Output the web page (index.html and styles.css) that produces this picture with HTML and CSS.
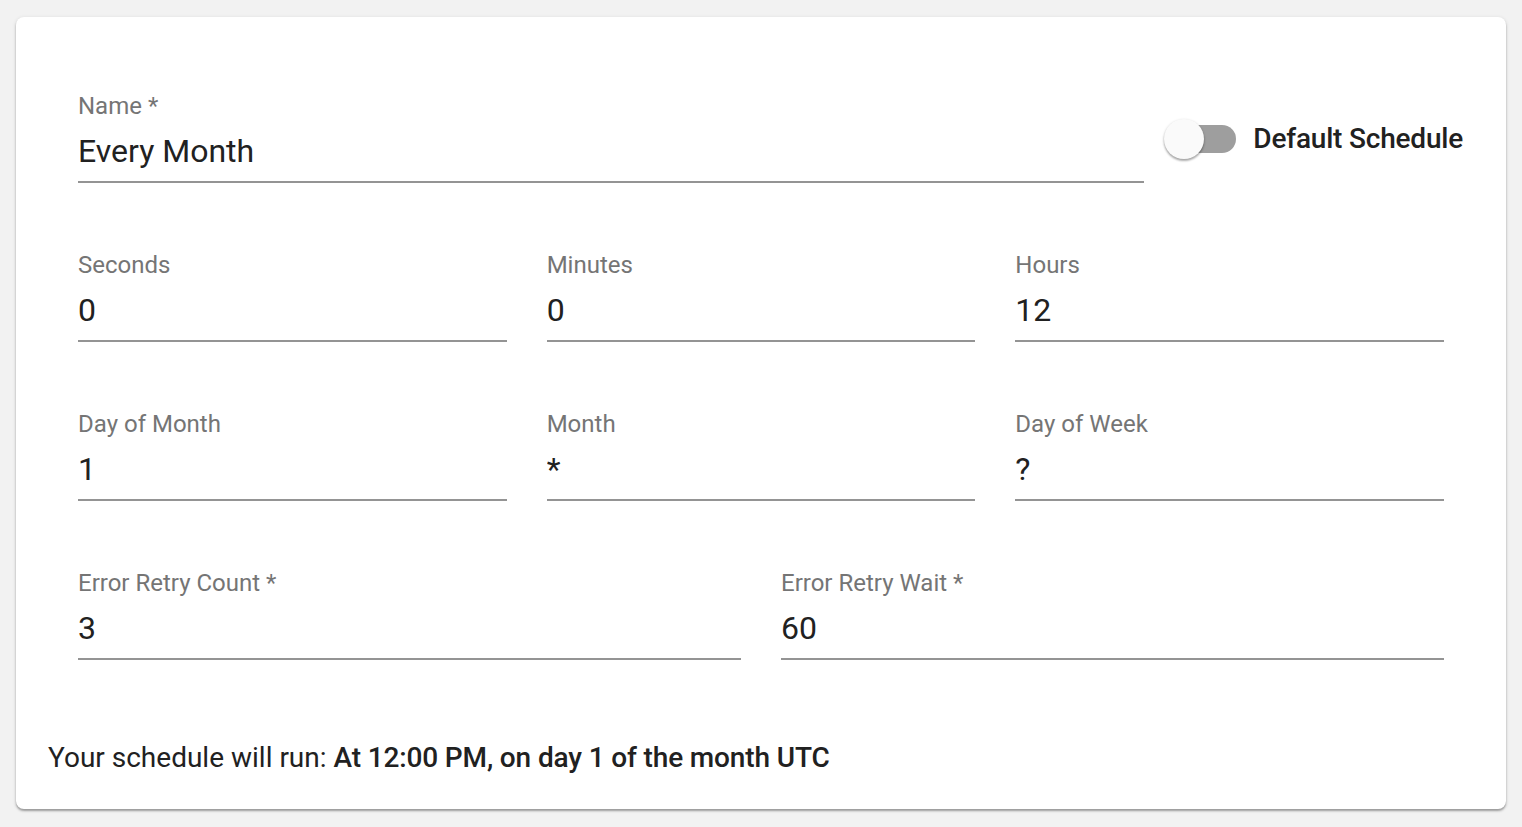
FILE: index.html
```html
<!DOCTYPE html>
<html lang="en">
<head>
    <meta charset="UTF-8">
    <meta name="viewport" content="width=device-width, initial-scale=1.0">
    <title>Schedule</title>
    <link rel="stylesheet" href="styles.css">
</head>
<body>

<div class="schedule-card">
    <div class="schedule-form">

        <!-- name + default toggle -->
        <div class="name-row">
            <div class="field name-field">
                <label for="name">Name *</label>
                <input type="text" id="name" value="Every Month">
            </div>
            <div class="default-toggle">
                <span class="switch">
                    <span class="switch-track"></span>
                    <span class="switch-thumb"></span>
                </span>
                <span class="toggle-label">Default Schedule</span>
            </div>
        </div>

        <!-- cron parts -->
        <div class="field-row three">
            <div class="field">
                <label for="seconds">Seconds</label>
                <input type="text" id="seconds" value="0">
            </div>
            <div class="field">
                <label for="minutes">Minutes</label>
                <input type="text" id="minutes" value="0">
            </div>
            <div class="field">
                <label for="hours">Hours</label>
                <input type="text" id="hours" value="12">
            </div>
        </div>

        <div class="field-row three">
            <div class="field">
                <label for="day-of-month">Day of Month</label>
                <input type="text" id="day-of-month" value="1">
            </div>
            <div class="field">
                <label for="month">Month</label>
                <input type="text" id="month" value="*">
            </div>
            <div class="field">
                <label for="day-of-week">Day of Week</label>
                <input type="text" id="day-of-week" value="?">
            </div>
        </div>

        <!-- retry settings -->
        <div class="field-row two">
            <div class="field">
                <label for="retry-count">Error Retry Count *</label>
                <input type="text" id="retry-count" value="3">
            </div>
            <div class="field">
                <label for="retry-wait">Error Retry Wait *</label>
                <input type="text" id="retry-wait" value="60">
            </div>
        </div>
    </div>

    <p class="summary">Your schedule will run: <strong>At 12:00 PM, on day 1 of the month UTC</strong></p>
</div>

</body>
</html>
```

FILE: styles.css
```css
body {
    font-family: Roboto, "Liberation Sans", Arial, sans-serif;
    background-color: #f2f2f2;
    margin: 0;
    padding: 17px 16px 19px;
}
.schedule-card {
    background-color: #fff;
    border-radius: 8px;
    box-shadow: 0 2px 2px rgba(0, 0, 0, 0.3), 0 1px 4px rgba(0, 0, 0, 0.12);
    padding: 77px 32px 31px;
}
.schedule-form {
    padding: 0 30px;
}
.name-row {
    display: flex;
    align-items: center;
    margin-right: -19px;
}
.name-field {
    flex: 1;
}
.field-row {
    display: grid;
    gap: 40px;
    margin-top: 70px;
}
.field-row.three {
    grid-template-columns: 1fr 1fr 1fr;
}
.field-row.two {
    grid-template-columns: 1fr 1fr;
}
.field {
    display: flex;
    flex-direction: column;
}
.field label {
    font-size: 24px;
    line-height: 24px;
    color: #757575;
}
.field input {
    font-family: inherit;
    font-size: 32px;
    line-height: 38px;
    height: 38px;
    margin-top: 14px;
    padding: 0 0 11px;
    border: none;
    border-bottom: 2px solid #949494;
    color: #212121;
    background: transparent;
    outline: none;
    box-sizing: content-box;
    width: 100%;
}
.default-toggle {
    display: flex;
    align-items: center;
    margin-left: 20px;
}
.switch {
    position: relative;
    width: 72px;
    height: 40px;
    display: inline-block;
}
.switch-track {
    position: absolute;
    left: 6px;
    right: 0;
    top: 6px;
    height: 28px;
    border-radius: 14px;
    background-color: #9e9e9e;
}
.switch-thumb {
    position: absolute;
    left: 0;
    top: 0;
    width: 40px;
    height: 40px;
    border-radius: 50%;
    background-color: #fafafa;
    box-shadow: 0 2px 2px rgba(0, 0, 0, 0.24), 0 1px 3px rgba(0, 0, 0, 0.2);
}
.toggle-label {
    margin-left: 17px;
    font-size: 28px;
    font-weight: 500;
    letter-spacing: -0.2px;
    color: #212121;
}
.summary {
    margin: 78px 0 0;
    font-size: 28px;
    line-height: 40px;
    color: #212121;
}
.summary strong {
    font-weight: 500;
    letter-spacing: -0.14px;
}
```
